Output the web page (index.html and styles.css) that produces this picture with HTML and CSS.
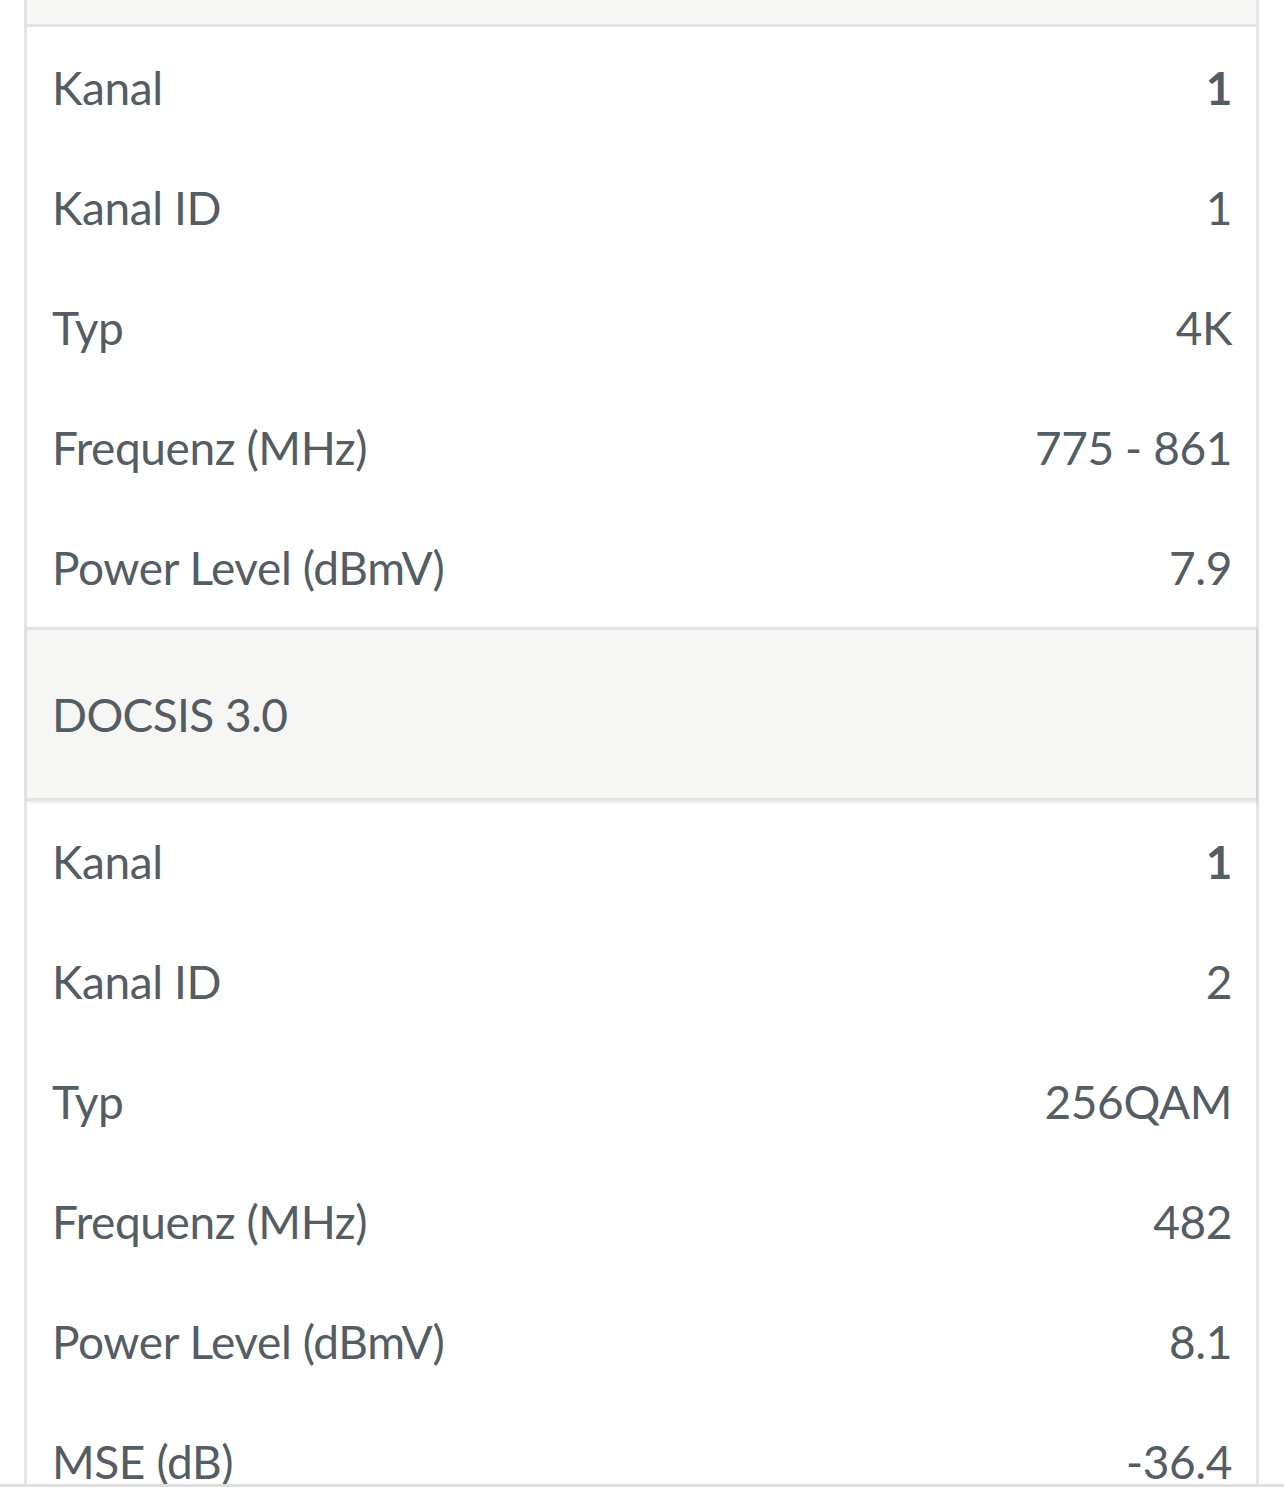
FILE: index.html
```html
<!DOCTYPE html>
<html lang="de">
<head>
<meta charset="utf-8">
<link rel="stylesheet" href="styles.css">
</head>
<body>
<div class="panel">
  <div class="group-head group-head--top"></div>
  <div class="row"><span class="label">Kanal</span><span class="value strong">1</span></div>
  <div class="row"><span class="label">Kanal ID</span><span class="value">1</span></div>
  <div class="row"><span class="label">Typ</span><span class="value">4K</span></div>
  <div class="row"><span class="label">Frequenz (MHz)</span><span class="value">775 - 861</span></div>
  <div class="row"><span class="label">Power Level (dBmV)</span><span class="value">7.9</span></div>
  <div class="group-head"><span class="label">DOCSIS 3.0</span></div>
  <div class="row"><span class="label">Kanal</span><span class="value strong">1</span></div>
  <div class="row"><span class="label">Kanal ID</span><span class="value">2</span></div>
  <div class="row"><span class="label">Typ</span><span class="value">256QAM</span></div>
  <div class="row"><span class="label">Frequenz (MHz)</span><span class="value">482</span></div>
  <div class="row"><span class="label">Power Level (dBmV)</span><span class="value">8.1</span></div>
  <div class="row"><span class="label">MSE (dB)</span><span class="value">-36.4</span></div>
</div>
<div class="bottom-bar"></div>
</body>
</html>
```

FILE: styles.css
```css
html, body {
  margin: 0;
  padding: 0;
  background: #ffffff;
}
body {
  font-family: Lato, "Open Sans", sans-serif;
  color: #545c64;
  overflow: hidden;
  height: 1487px;
}
.panel {
  margin: 0 25px 0 24px;
  border-left: 3px solid #e4e4e4;
  border-right: 3px solid #e4e4e4;
  background: #ffffff;
}
.row {
  height: 120px;
  display: flex;
  align-items: center;
  justify-content: space-between;
  padding: 0 24px 0 25px;
  font-size: 46px;
  letter-spacing: -0.4px;
}
.strong {
  font-weight: 700;
}
.group-head {
  height: 168px;
  display: flex;
  align-items: center;
  padding: 0 25px;
  background: #f6f6f5;
  border-top: 3px solid #e4e4e4;
  border-bottom: 3px solid #e4e4e4;
  font-size: 46px;
  letter-spacing: -0.6px;
  box-shadow: 1px 1px 4px rgba(0, 0, 0, 0.12);
}
.group-head--top {
  height: 24px;
  border-top: none;
  box-shadow: none;
}
.bottom-bar {
  position: fixed;
  left: 0;
  right: 0;
  bottom: 0;
  height: 3px;
  background: #dedede;
}
```
